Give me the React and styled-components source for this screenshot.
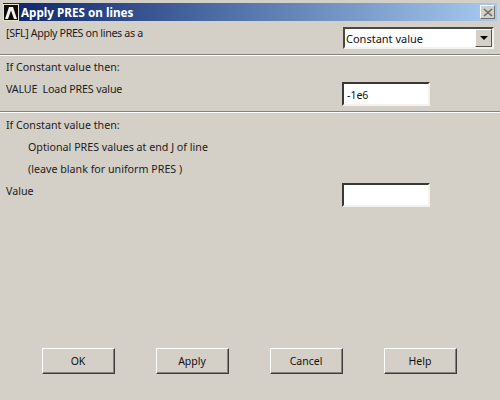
import React from "react";
import styled, { createGlobalStyle } from "styled-components";

const Global = createGlobalStyle`
  html, body { margin: 0; padding: 0; background: #d4d0c8; }
  #root { width: 500px; height: 400px; overflow: hidden; }
`;
const Dialog = styled.div`
  width: 500px; height: 400px; box-sizing: border-box;
  background: #d4d0c8; padding-top: 3px;
  display: flex; flex-direction: column;
  font-family: "Noto Sans", "Liberation Sans", sans-serif;
  font-size: 10.7px; color: #1c1c1c;
`;
const TitleBar = styled.div`
  height: 18px; margin: 0 3px 0 3px; padding: 0 2px 0 0; flex: none;
  display: flex; align-items: center; gap: 2px;
  background: linear-gradient(90deg, #0a246a 0%, #a6caf0 100%);
`;
const Logo = styled.svg`width: 16px; height: 17px; flex: none;`;
const Title = styled.div`
  flex: 1; color: #fff; font-weight: 700; font-size: 11.7px; line-height: 18px;
`;
const CloseBtn = styled.div`
  width: 15px; height: 14px; box-sizing: border-box; background: #d4d0c8;
  border: 1px solid; border-color: #fff #6f6d68 #6f6d68 #fff;
  display: flex; align-items: center; justify-content: center;
`;
const Section = styled.div`
  height: ${p => p.$h}px; flex: none; box-sizing: border-box;
  padding: ${p => p.$pt}px 6px 0 6px;
  display: flex; flex-direction: column;
`;
const Row = styled.div`
  display: flex; align-items: flex-start; justify-content: space-between;
`;
const Label = styled.span`
  white-space: pre; line-height: 22px; padding-left: ${p => p.$indent || 0}px;
  letter-spacing: ${p => p.$tight || 0}px;
`;
const Divider = styled.div`
  height: 1px; flex: none; background: #fff; border-top: 1px solid #84827c;
`;
const Select = styled.div`
  width: 151px; height: 22px; margin-top: 5px; box-sizing: border-box; background: #fff;
  border: 2px solid; border-color: #4a4844 #f4f2ee #f4f2ee #4a4844;
  display: flex; align-items: center; padding-left: 1px; font-size: 11px; color: #111;
`;
const SelectText = styled.span`flex: 1;`;
const Arrow = styled.div`
  width: 17px; height: 18px; box-sizing: border-box; background: #d4d0c8;
  border: 1px solid; border-color: #fff #55534e #55534e #fff;
  display: flex; align-items: center; justify-content: center;
`;
const Triangle = styled.div`
  width: 0; height: 0; border-style: solid; border-width: 4px 4px 0 4px;
  border-color: #000 transparent transparent transparent;
`;
const Input = styled.div`
  width: 88px; height: 24px; box-sizing: border-box; background: #fff;
  margin: ${p => p.$top}px 64px 0 0; padding: 1px 0 0 3px;
  border: 2px solid; border-color: #3a3834 #f4f2ee #f4f2ee #3a3834;
  display: flex; align-items: center; font-size: 10.5px; color: #111;
`;
const Buttons = styled.div`
  margin-top: auto; padding: 0 0 26px 42px;
  display: flex; gap: 41px;
`;
const Button = styled.div`
  width: 73px; height: 26px; box-sizing: border-box; background: #d4d0c8;
  border: 1px solid; border-color: #fff #3f3d39 #3f3d39 #fff;
  box-shadow: inset -1px -1px 0 #85837d;
  padding-right: 1px;
  display: flex; align-items: center; justify-content: center; color: #111; font-size: 10.5px;
`;

export default function App() {
  return (
    <Dialog>
      <Global />
      <TitleBar>
        <Logo viewBox="0 0 16 17">
          <rect x="0.5" y="0.5" width="15" height="16" fill="#0c0c0c" stroke="#e8e4c8" />
          <path d="M2 15 L6 3 H10 L14 15 H11 L8 6.5 L5 15 Z" fill="#f4f2ea" />
        </Logo>
        <Title>Apply PRES on lines</Title>
        <CloseBtn>
          <svg width="10" height="9" viewBox="0 0 10 9">
            <path d="M1 1 L9 8 M9 1 L1 8" stroke="#6a686a" strokeWidth="1.6" />
          </svg>
        </CloseBtn>
      </TitleBar>
      <Section $h={33} $pt={1}>
        <Row>
          <Label $tight={-0.35}>[SFL] Apply PRES on lines as a</Label>
          <Select>
            <SelectText>Constant value</SelectText>
            <Arrow><Triangle /></Arrow>
          </Select>
        </Row>
      </Section>
      <Divider />
      <Section $h={55} $pt={0}>
        <Row><Label>If Constant value then:</Label></Row>
        <Row>
          <Label $tight={-0.15}>VALUE  Load PRES value</Label>
          <Input $top={4}>-1e6</Input>
        </Row>
      </Section>
      <Divider />
      <Section $h={96} $pt={1}>
        <Row><Label>If Constant value then:</Label></Row>
        <Row><Label $indent={22}>Optional PRES values at end J of line</Label></Row>
        <Row><Label $indent={22}>(leave blank for uniform PRES )</Label></Row>
        <Row>
          <Label>Value</Label>
          <Input $top={3} />
        </Row>
      </Section>
      <Buttons>
        <Button>OK</Button>
        <Button>Apply</Button>
        <Button>Cancel</Button>
        <Button>Help</Button>
      </Buttons>
    </Dialog>
  );
}
